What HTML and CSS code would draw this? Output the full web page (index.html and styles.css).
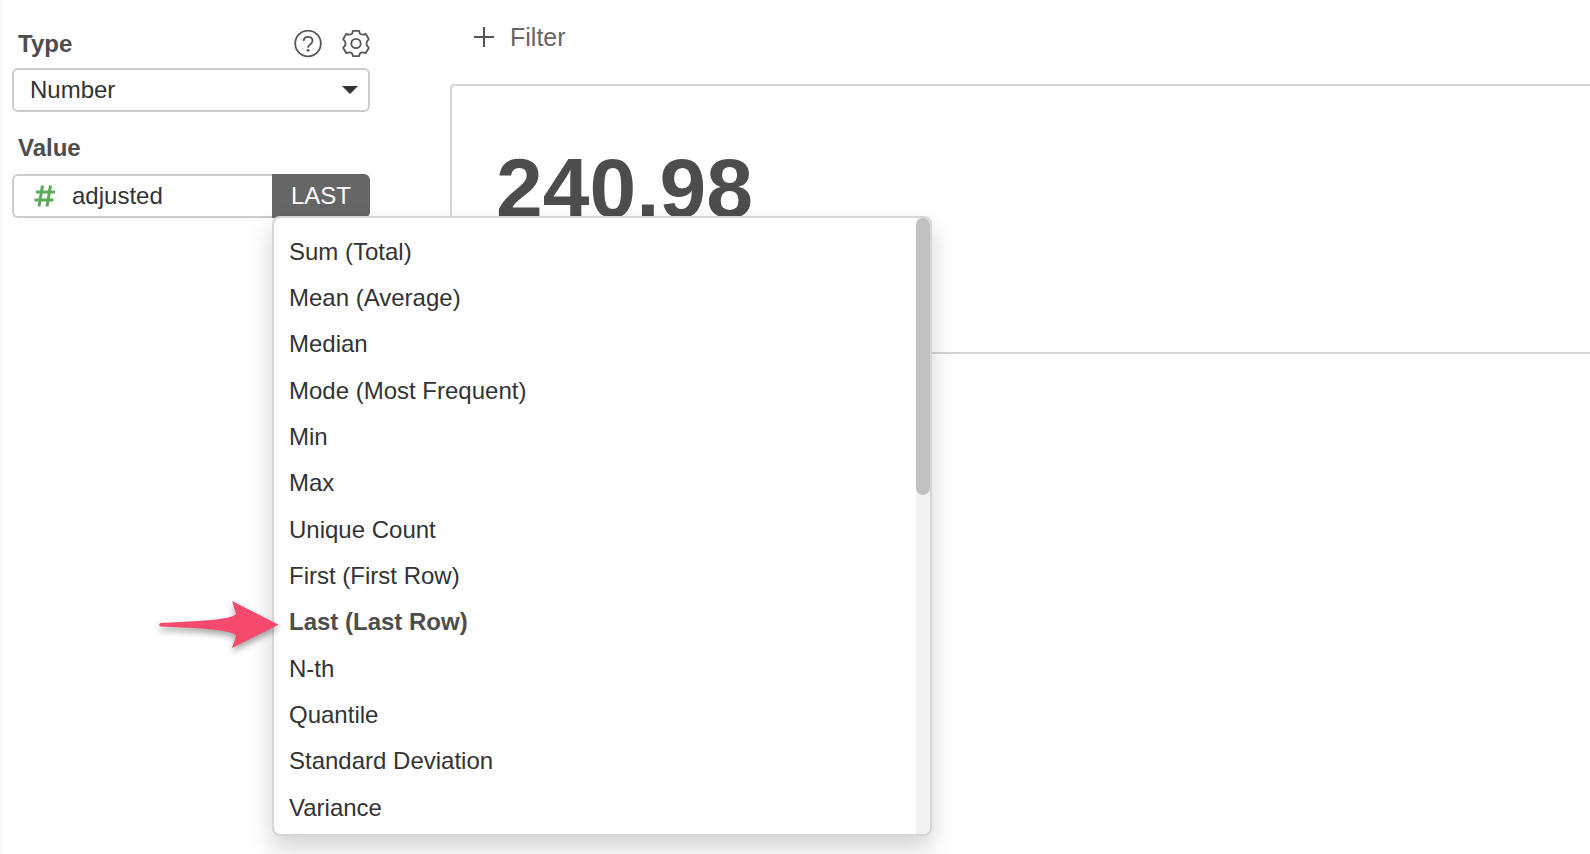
FILE: index.html
```html
<!DOCTYPE html>
<html lang="en">
<head>
	<meta charset="utf-8">
	<title>Number chart</title>
	<link rel="stylesheet" href="styles.css">
</head>
<body>
<div class="page">
	<div class="sidebar">
		<div class="field-head">
			<label for="type">Type</label>
			<div class="tools">
				<button type="button" class="icon-btn" aria-label="Help">
					<svg width="28" height="28" viewBox="0 0 28 28" fill="none" stroke="#555" stroke-width="1.8">
						<circle cx="14" cy="13.500" r="12.800"/>
						<path d="M9.800 11c0-2.700 1.700-4.200 4.300-4.200s4.400 1.500 4.400 3.900c0 1.700-.9 2.500-2.200 3.500-1.500 1.100-2.200 1.800-2.200 3.500"/>
						<circle cx="14.100" cy="20.300" r="1.400" fill="#555" stroke="none"/>
					</svg>
				</button>
				<button type="button" class="icon-btn" aria-label="Settings">
					<svg width="28" height="28" viewBox="0 0 28 28" fill="none" stroke="#555" stroke-width="1.8" stroke-linejoin="round">
						<path d="M11.300.8h5.400q.6 0 .6.700c0 2.300 1.400 3.200 3.700 3.200.9 0 1.300-.3 2-.7q.6-.3 1 .3l2.600 4.400q.3.600-.2 1c-1 .7-1.900 1.700-1.900 3.800s.9 3.100 1.900 3.800q.5.400.2 1l-2.600 4.400q-.4.600-1 .3c-.7-.4-1.100-.7-2-.7-2.300 0-3.700.9-3.700 3.200q0 .7-.6.700h-5.400q-.6 0-.6-.7c0-2.300-1.400-3.200-3.700-3.200-.9 0-1.300.3-2 .7q-.6.300-1-.3l-2.600-4.400q-.3-.6.200-1c1-.7 1.900-1.700 1.900-3.800s-.9-3.100-1.900-3.800q-.5-.4-.2-1l2.600-4.400q.4-.6 1-.3c.7.400 1.100.7 2 .7 2.300 0 3.700-.9 3.700-3.200q0-.7.600-.7z"/>
						<circle cx="14" cy="13.500" r="4.700"/>
					</svg>
				</button>
			</div>
		</div>
		<div class="select-box">
			<select id="type">
				<option>Number</option>
			</select>
			<svg class="caret" width="16" height="8" viewBox="0 0 16 8"><path d="M0 0h16L8 8z" fill="#333"/></svg>
		</div>

		<div class="field-head value-head">
			<label for="column">Value</label>
		</div>
		<div class="value-box">
			<button type="button" class="column" id="column">
				<svg width="22" height="22" viewBox="0 0 22 22" fill="none" stroke="#5cab5b" stroke-width="3">
					<path d="M8.500.5L5 21.500M16.500.5L13 21.500M2 7h19M.5 15h19"/>
				</svg>
				<span>adjusted</span>
			</button>
			<div class="aggregate">
				<button type="button" class="agg-btn">LAST</button>
				<div class="menu">
					<ul>
						<li><button type="button">Sum (Total)</button></li>
						<li><button type="button">Mean (Average)</button></li>
						<li><button type="button">Median</button></li>
						<li><button type="button">Mode (Most Frequent)</button></li>
						<li><button type="button">Min</button></li>
						<li><button type="button">Max</button></li>
						<li><button type="button">Unique Count</button></li>
						<li><button type="button">First (First Row)</button></li>
						<li class="selected">
							<button type="button">Last (Last Row)</button>
							<svg class="arrow" width="122" height="50" viewBox="0 0 122 50">
								<path d="M2.500 23C30 21.500 66 20.500 76 15.500q2.500-1 1.800-2.500L74 1l46.700 23.700L74 48l3.800-11q.6-2-1.500-3C66 29 30 27.500 2.500 26.500q-2.800-1.700 0-3.500z" fill="#f54a6e"/>
							</svg>
						</li>
						<li><button type="button">N-th</button></li>
						<li><button type="button">Quantile</button></li>
						<li><button type="button">Standard Deviation</button></li>
						<li><button type="button">Variance</button></li>
					</ul>
					<div class="scrollbar"><div class="thumb"></div></div>
				</div>
			</div>
		</div>
	</div>

	<div class="main">
		<button type="button" class="filter">
			<svg width="20" height="20" viewBox="0 0 20 20" stroke="#555" stroke-width="2"><path d="M10 0v20M0 10h20"/></svg>
			<span>Filter</span>
		</button>
		<div class="card">
			<div class="number">240.98</div>
		</div>
	</div>
</div>
</body>
</html>
```
FILE: styles.css
```css
*{
	box-sizing: border-box;
}
body{
	margin: 0;
	background: #fff;
	color: #333;
	font-family: "Helvetica Neue", "Liberation Sans", Arial, sans-serif;
	font-size: 24px;
}
button,
select{
	font: inherit;
	color: inherit;
	background: none;
	border: 0;
	padding: 0;
	margin: 0;
	cursor: pointer;
}
svg{
	display: block;
}
.page{
	display: flex;
	min-height: 100vh;
	overflow: hidden;
}

/* left panel */
.sidebar{
	flex: none;
	width: 450px;
	padding: 28px 80px 0 10px;
	border-left: 2px solid #f9f9f9;
}
.field-head{
	display: flex;
	align-items: center;
	justify-content: space-between;
	height: 32px;
	padding-left: 6px;
	margin-bottom: 8px;
	color: #4d4d4d;
	font-weight: bold;
}
.value-head{
	margin-top: 20px;
	margin-bottom: 10px;
}
.tools{
	display: flex;
	gap: 20px;
}
.select-box{
	position: relative;
}
.select-box select{
	appearance: none;
	display: block;
	width: 100%;
	height: 44px;
	padding: 0 16px 2px;
	border: 2px solid #ccc;
	border-radius: 6px;
	background: #fff;
}
.caret{
	position: absolute;
	right: 12px;
	top: 18px;
	pointer-events: none;
}
.value-box{
	display: flex;
	height: 44px;
}
.column{
	flex: 1;
	display: flex;
	align-items: center;
	gap: 16px;
	padding-left: 20px;
	border: 2px solid #ccc;
	border-right: 0;
	border-radius: 6px 0 0 6px;
}
.aggregate{
	position: relative;
	width: 98px;
}
.agg-btn{
	width: 100%;
	height: 100%;
	background: #666;
	color: #fff;
	border-radius: 0 6px 6px 0;
}

/* dropdown */
.menu{
	position: absolute;
	z-index: 10;
	left: 0;
	top: 42px;
	width: 660px;
	display: flex;
	background: #fff;
	border: 2px solid #d6d6d6;
	border-radius: 8px;
	box-shadow: 0 12px 24px rgba(0,0,0,.175);
}
.menu ul{
	flex: 1;
	list-style: none;
	margin: 0;
	padding: 11px 0 3px;
}
.menu li{
	position: relative;
	height: 46px;
}
.menu li:nth-child(3n){
	height: 47px;
}
.menu li button{
	display: block;
	width: 100%;
	height: 46px;
	padding-left: 15px;
	text-align: left;
}
.menu .selected{
	color: #4d4d4d;
	font-weight: bold;
}
.arrow{
	position: absolute;
	left: -116px;
	top: 1px;
	overflow: visible;
	filter: drop-shadow(0 4px 3px rgba(0,0,0,.35));
}
.scrollbar{
	width: 14px;
	background: #f2f2f2;
	border-radius: 0 6px 6px 0;
}
.thumb{
	height: 45%;
	background: #c1c1c1;
	border-radius: 7px;
}

/* chart */
.main{
	flex: 1;
	min-width: 0;
}
.filter{
	display: flex;
	align-items: center;
	gap: 16px;
	height: 40px;
	margin: 17px 0 27px 24px;
	color: #666;
	font-size: 25px;
}
.card{
	height: 270px;
	padding: 54px 40px;
	border: 2px solid #d5d5d5;
	border-right: 0;
	border-radius: 4px 0 0 0;
}
.number{
	color: #4d4d4d;
	font-size: 84px;
	font-weight: bold;
	line-height: 96px;
	padding-left: 4px;
}
```
